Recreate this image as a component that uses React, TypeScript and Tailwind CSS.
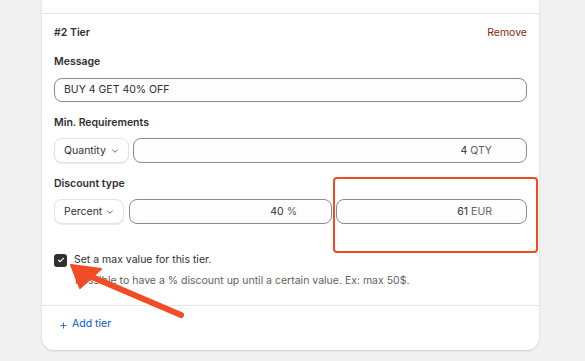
import { ChevronDown, Plus } from 'lucide-react';

function Select({ label, w }: { label: string; w: string }) {
  return (
    <div
      className={`${w} h-[25px] shrink-0 flex items-center justify-between pl-[9px] pr-[8px] bg-white border border-[#e3e3e3] rounded-lg shadow-[0_1px_0_rgba(0,0,0,0.08)] text-[10.5px] text-[#303030]`}
    >
      <span>{label}</span>
      <ChevronDown size={10} strokeWidth={2} className="text-[#4a4a4a]" />
    </div>
  );
}

function NumberInput({ value, suffix, className }: { value: string; suffix: string; className: string }) {
  return (
    <div
      className={`${className} h-[25px] flex items-center justify-end pr-[34px] bg-[#fdfdfd] border border-[#8a8a8a] rounded-lg text-[10.5px]`}
    >
      <span className="text-[#303030]">{value}</span>
      <span className="ml-[3px] text-[#616161]">{suffix}</span>
    </div>
  );
}

export default function App() {
  return (
    <div className="relative min-h-screen bg-[#f1f1f1] font-['Inter',sans-serif] overflow-hidden">
      <div className="ml-[42px] w-[497px] bg-white rounded-b-xl shadow-[0_1px_2px_rgba(0,0,0,0.15)]">
        <div className="h-[14px] border-b border-[#e6e6e6]" />
        <div className="px-3 pt-[12px] pb-[17px]">
          <div className="flex items-center justify-between h-[14px] text-[10.5px]">
            <span className="font-semibold text-[#303030]">#2 Tier</span>
            <span className="text-[#8e1f0b]">Remove</span>
          </div>

          <div className="mt-[15px] h-[14px] leading-[14px] text-[10.5px] font-semibold text-[#303030]">Message</div>
          <div className="mt-[9px] h-[24px] flex items-center px-[9px] bg-[#fdfdfd] border border-[#8a8a8a] rounded-lg text-[10.5px] text-[#303030]">
            BUY 4 GET 40% OFF
          </div>

          <div className="mt-[14px] h-[14px] leading-[14px] text-[10.5px] font-semibold text-[#303030]">Min. Requirements</div>
          <div className="mt-[8px] flex gap-[4px]">
            <Select label="Quantity" w="w-[75px]" />
            <NumberInput value="4" suffix="QTY" className="flex-1" />
          </div>

          <div className="mt-[14px] h-[14px] leading-[14px] text-[10.5px] font-semibold text-[#303030]">Discount type</div>
          <div className="mt-[8px] flex">
            <Select label="Percent" w="w-[70px]" />
            <NumberInput value="40" suffix="%" className="ml-[5px] w-[203px]" />
            <NumberInput value="61" suffix="EUR" className="ml-[4px] flex-1" />
          </div>

          <div className="mt-[29px] flex items-center h-[14px]">
            <div className="w-[13px] h-[13px] rounded-[3px] bg-[#303030] flex items-center justify-center">
              <svg width="8" height="8" viewBox="0 0 8 8">
                <path d="M1.6 4.2 L3.2 5.7 L6.4 2.3" fill="none" stroke="#fff" strokeWidth="1.2" strokeLinecap="round" strokeLinejoin="round" />
              </svg>
            </div>
            <span className="ml-[7px] text-[10.5px] text-[#303030]">Set a max value for this tier.</span>
          </div>
          <div className="mt-[7px] pl-[21px] h-[14px] leading-[14px] text-[10.5px] text-[#616161]">
            Possible to have a % discount up until a certain value. Ex: max 50$.
          </div>
        </div>
        <div className="border-t border-[#e6e6e6] px-3 pt-[11px] pb-[19px]">
          <div className="flex items-center h-[14px] text-[10.5px] text-[#005bd3]">
            <Plus size={9} strokeWidth={2.2} className="ml-[5px] mt-[3px]" />
            <span className="ml-[4px]">Add tier</span>
          </div>
        </div>
      </div>

      <div className="absolute left-[333px] top-[177px] w-[205px] h-[76px] border-[2.5px] border-[#f04a23] rounded-[4px]" />

      <svg className="absolute left-0 top-0" width="585" height="361" viewBox="0 0 585 361">
        <line x1="181" y1="315" x2="92" y2="277" stroke="#f24c26" strokeWidth="6" strokeLinecap="round" />
        <polygon points="71,265 101,269 80,288" fill="#f24c26" stroke="#f24c26" strokeWidth="2" strokeLinejoin="round" />
      </svg>
    </div>
  );
}
